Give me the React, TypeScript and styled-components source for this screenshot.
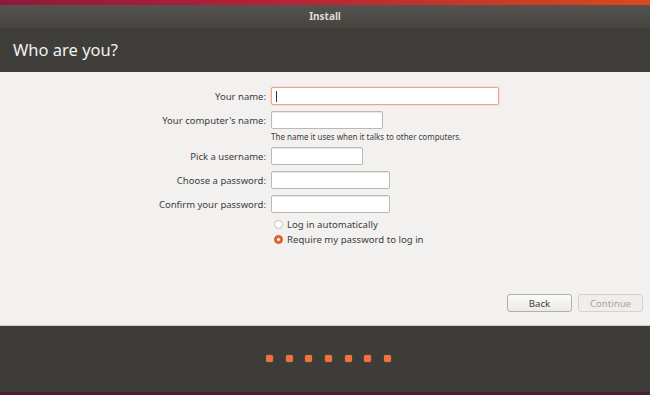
import styled, { createGlobalStyle } from "styled-components";

const GlobalStyle = createGlobalStyle`
  html, body {
    margin: 0;
    padding: 0;
    width: 650px;
    height: 395px;
    overflow: hidden;
    background: #3c3b37;
  }
  * { box-sizing: border-box; }
`;

const Screen = styled.div`
  display: flex;
  flex-direction: column;
  width: 650px;
  height: 395px;
  font-family: "Noto Sans", "DejaVu Sans", sans-serif;
`;

const Wallpaper = styled.div`
  height: 5px;
  background: linear-gradient(90deg, #8e1a3a 0%, #b3213a 40%, #c93a26 75%, #d84a1c 100%);
`;

const TitleBar = styled.div`
  height: 23px;
  display: flex;
  align-items: center;
  justify-content: center;
  padding-bottom: 2px;
  background: linear-gradient(#55534f, #46443f);
  color: #dfdbd2;
  font-size: 10px;
  font-weight: 700;
`;

const Header = styled.div`
  height: 44px;
  display: flex;
  align-items: center;
  padding: 0 0 2px 13px;
  background: #3f3e3a;
  color: #f2f1f0;
  font-size: 16.5px;
`;

const Content = styled.main`
  height: 254px;
  display: flex;
  flex-direction: column;
  background: #f2f1f0;
  border-bottom: 1px solid #cfcdca;
  padding-top: 15px;
`;

const Form = styled.div`
  display: grid;
  grid-template-columns: 266px auto;
  column-gap: 5px;
  align-items: center;
`;

const Label = styled.label`
  justify-self: end;
  font-size: 9.5px;
  color: #3c3c3c;
  height: 24px;
  line-height: 20px;
`;

const Field = styled.div<{ $w: number; $focus?: boolean }>`
  width: ${(p) => p.$w}px;
  height: 18px;
  margin-bottom: 6px;
  border-radius: 2px;
  background: #fff;
  border: 1px solid ${(p) => (p.$focus ? "#e9a48a" : "#bcb9b4")};
  box-shadow: ${(p) => (p.$focus ? "0 0 0 1px #f6e0d6" : "inset 0 1px 1px #ebe9e6")};
  display: flex;
  align-items: center;
  padding-left: 4px;
`;

const Caret = styled.span`
  width: 1px;
  height: 11px;
  background: #333;
`;

const Hint = styled.div`
  grid-column: 2;
  font-size: 8px;
  color: #3c3c3c;
  height: 12px;
  margin: -4px 0 4px;
`;

const Options = styled.div`
  grid-column: 2;
  display: flex;
  flex-direction: column;
  gap: 2px;
  padding-left: 3px;
  margin-top: -1px;
`;

const Option = styled.div`
  display: flex;
  align-items: center;
  gap: 4px;
  font-size: 9.6px;
  color: #3c3c3c;
  height: 13px;
`;

const Radio = styled.span<{ $on?: boolean }>`
  width: 9px;
  height: 9px;
  border-radius: 50%;
  background: ${(p) => (p.$on ? "#e8652f" : "#fff")};
  border: 1px solid ${(p) => (p.$on ? "#d25527" : "#c4c1bc")};
  display: flex;
  align-items: center;
  justify-content: center;
  &::after {
    content: "";
    width: 3px;
    height: 3px;
    border-radius: 50%;
    background: ${(p) => (p.$on ? "#fff" : "transparent")};
  }
`;

const Actions = styled.div`
  margin-top: auto;
  display: flex;
  justify-content: flex-end;
  gap: 6px;
  padding: 0 7px 13px 0;
`;

const Button = styled.button<{ $disabled?: boolean }>`
  width: 65px;
  height: 18px;
  border-radius: 3px;
  font-family: inherit;
  font-size: 9.6px;
  padding: 0;
  border: 1px solid ${(p) => (p.$disabled ? "#d6d3cf" : "#b3b0ab")};
  background: ${(p) => (p.$disabled ? "#efeeec" : "linear-gradient(#fbfbfa, #ebeae8)")};
  color: ${(p) => (p.$disabled ? "#a8a5a0" : "#3c3c3c")};
`;

const Footer = styled.footer`
  flex: 1;
  display: flex;
  align-items: center;
  justify-content: center;
  gap: 12.7px;
  padding-bottom: 2px;
  padding-left: 7px;
  background: #3d3c38;
  border-bottom: 3px solid #4b1d35;
`;

const Dot = styled.span`
  width: 7px;
  height: 7px;
  border-radius: 2px;
  background: #f0703f;
  box-shadow: 0 0 1px #f58050;
`;

const fields = [
  { label: "Your name:", w: 228, focus: true },
  { label: "Your computer's name:", w: 112 },
  { label: "Pick a username:", w: 92 },
  { label: "Choose a password:", w: 119 },
  { label: "Confirm your password:", w: 119 },
];

export default function App() {
  return (
    <>
      <GlobalStyle />
      <Screen>
        <Wallpaper />
        <TitleBar>Install</TitleBar>
        <Header>Who are you?</Header>
        <Content>
          <Form>
            {fields.map((f, i) => (
              <>
                <Label key={f.label}>{f.label}</Label>
                <Field $w={f.w} $focus={f.focus}>
                  {f.focus && <Caret />}
                </Field>
                {i === 1 && <Hint>The name it uses when it talks to other computers.</Hint>}
              </>
            ))}
            <Options>
              <Option>
                <Radio />
                Log in automatically
              </Option>
              <Option>
                <Radio $on />
                Require my password to log in
              </Option>
            </Options>
          </Form>
          <Actions>
            <Button>Back</Button>
            <Button $disabled>Continue</Button>
          </Actions>
        </Content>
        <Footer>
          {Array.from({ length: 7 }).map((_, i) => (
            <Dot key={i} />
          ))}
        </Footer>
      </Screen>
    </>
  );
}
